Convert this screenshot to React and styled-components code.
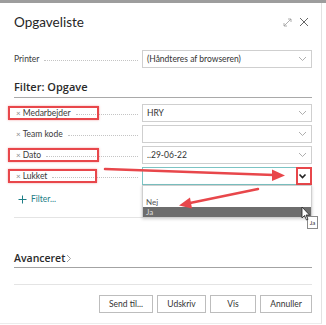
import React from 'react'
import styled, { createGlobalStyle, css } from 'styled-components'

const GlobalStyle = createGlobalStyle`
  html, body { margin: 0; padding: 0; background: #fff; }
  body { font-family: Lato, "Open Sans", sans-serif; color: #222; }
`

const Page = styled.div`
  position: relative;
  width: 326px;
  height: 325px;
  overflow: hidden;
  background: #fff;
`

const TopStrip = styled.div`
  height: 3px;
  background: #9d9d9d;
`

const Dialog = styled.div`
  width: 322px;
  box-sizing: border-box;
  padding: 0 9px 10px 14px;
  border-right: 1px solid #e2e2e2;
  border-bottom: 1px solid #ececec;
`

const Header = styled.div`
  height: 38px;
  display: flex;
  align-items: center;
  justify-content: space-between;
`

const Title = styled.h1`
  margin: 0;
  font-size: 13.5px;
  font-weight: 400;
  color: #262626;
`

const HeaderIcons = styled.div`
  display: flex;
  align-items: center;
  gap: 7px;
  padding-right: 3px;
  color: #7a7a7a;
`

const FieldRow = styled.div`
  display: flex;
  align-items: center;
  height: 18px;
  margin-top: ${p => p.$top || 0}px;
`

const Label = styled.div`
  position: relative;
  width: 128px;
  flex: 0 0 128px;
  display: flex;
  align-items: center;
  font-size: 8.5px;
  color: #3a3a3a;
  padding-left: ${p => (p.$removable ? 2 : 0)}px;
  box-sizing: border-box;
  white-space: nowrap;
  ${p => p.$marked && css`
    &::before {
      content: '';
      position: absolute;
      left: -6px;
      width: ${p.$markWidth || 83}px;
      top: -2px;
      bottom: -2px;
      border: 2px solid #e8474b;
      box-shadow: 0 0 2px rgba(232, 71, 75, 0.5);
    }
  `}
`

const Remove = styled.span`
  color: #8a8a8a;
  font-size: 8px;
  margin-right: 2px;
`

const Leader = styled.span`
  flex: 1;
  margin: 3px 4px 0 5px;
  border-bottom: 1px dotted #c4c4c4;
`

const SelectBox = styled.div`
  position: relative;
  flex: 1;
  height: 18px;
  box-sizing: border-box;
  border: 1px solid ${p => (p.$active ? '#7cc4c4' : '#cfcfcf')};
  display: flex;
  align-items: center;
  padding: 0 4px;
  font-size: 8.5px;
  color: #333;
  background: #fff;
`

const Chevron = styled.span`
  margin-left: auto;
  display: flex;
  align-items: center;
`

const ChevronMark = styled.span`
  position: absolute;
  right: -1px;
  top: -1px;
  width: 16px;
  height: 18px;
  box-sizing: border-box;
  border: 2px solid #e8474b;
`

const DropList = styled.div`
  position: absolute;
  left: -1px;
  right: -1px;
  top: 17px;
  border: 1px solid #cfcfcf;
  background: #fff;
  box-shadow: 0 1px 3px rgba(0, 0, 0, 0.2);
  z-index: 2;
`

const Option = styled.div`
  height: 10px;
  line-height: 10px;
  padding: 0 3px;
  font-size: 8px;
  color: ${p => (p.$selected ? '#dedede' : '#555')};
  background: ${p => (p.$selected ? '#6d6d6d' : 'transparent')};
  &:first-child { height: 11px; }
`

const SectionTitle = styled.h2`
  margin: 11px 0 6px;
  padding-bottom: 2px;
  font-family: "Open Sans", sans-serif;
  font-size: 11px;
  line-height: 16px;
  font-weight: 600;
  color: #2a2a2a;
  border-bottom: 1px solid #a9a9a9;
`

const Filters = styled.div`
  display: flex;
  flex-direction: column;
  gap: 3px;
`

const AddFilter = styled.div`
  margin-top: 7px;
  height: 14px;
  display: flex;
  align-items: center;
  gap: 4px;
  padding-left: 4px;
  font-size: 8.5px;
  color: #1d7d86;
`

const Divider = styled.div`
  margin-top: ${p => p.$top}px;
  border-top: 1px solid #e4e4e4;
`

const Advanced = styled.div`
  margin-top: 32px;
  padding-bottom: 1px;
  line-height: 16px;
  font-family: "Open Sans", sans-serif;
  font-size: 10.5px;
  font-weight: 600;
  color: #2a2a2a;
  border-bottom: 1px solid #a3a3a3;
  display: flex;
  align-items: center;
  gap: 1px;
`

const Footer = styled.div`
  margin-top: 10px;
  display: flex;
  justify-content: flex-end;
  gap: 4px;
`

const Button = styled.button`
  width: ${p => p.$w}px;
  height: 18px;
  padding: 0;
  border: 1px solid #bdbdbd;
  background: #fff;
  font-family: inherit;
  font-size: 8.5px;
  color: #333;
`

const Tooltip = styled.div`
  position: absolute;
  left: 307px;
  top: 216px;
  width: 11px;
  height: 13px;
  box-sizing: border-box;
  border: 1px solid #8a8a8a;
  background: #fff;
  font-size: 6px;
  display: flex;
  align-items: center;
  justify-content: center;
  color: #333;
  z-index: 3;
`

const Overlay = styled.svg`
  position: absolute;
  left: 0;
  top: 0;
  pointer-events: none;
  z-index: 4;
`

const SmallChevron = ({ bold }) => (
  <svg width="9" height="6" viewBox="0 0 9 6">
    {bold ? (
      <path d="M1.5 1.5 L4.5 4.5 L7.5 1.5" fill="none" stroke="#222" strokeWidth="1.6" />
    ) : (
      <path d="M1 1 L4.5 4.5 L8 1" fill="none" stroke="#9a9a9a" strokeWidth="0.8" />
    )}
  </svg>
)

const Field = ({ label, removable, marked, markWidth, value, children }) => (
  <FieldRow>
    <Label $removable={removable} $marked={marked} $markWidth={markWidth}>
      {removable && <Remove>×</Remove>}
      {label}
      <Leader />
    </Label>
    {children || (
      <SelectBox>
        {value}
        <Chevron><SmallChevron /></Chevron>
      </SelectBox>
    )}
  </FieldRow>
)

export default function App() {
  return (
    <Page>
      <GlobalStyle />
      <TopStrip />
      <Dialog>
        <Header>
          <Title>Opgaveliste</Title>
          <HeaderIcons>
            <svg width="9" height="9" viewBox="0 0 9 9">
              <path d="M1 8 L8 1 M5 1 H8 V4 M1 5 V8 H4" fill="none" stroke="#9a9a9a" strokeWidth="0.8" />
            </svg>
            <svg width="10" height="10" viewBox="0 0 10 10">
              <path d="M1 1 L9 9 M9 1 L1 9" fill="none" stroke="#666" strokeWidth="1" />
            </svg>
          </HeaderIcons>
        </Header>

        <FieldRow $top={9}>
          <Label>Printer<Leader /></Label>
          <SelectBox>
            (Håndteres af browseren)
            <Chevron><SmallChevron /></Chevron>
          </SelectBox>
        </FieldRow>

        <SectionTitle>Filter: Opgave</SectionTitle>

        <Filters>
          <Field label="Medarbejder" removable marked markWidth={87} value="HRY" />
          <Field label="Team kode" removable value="" />
          <Field label="Dato" removable marked markWidth={87} value="..29-06-22" />
          <Field label="Lukket" removable marked markWidth={85}>
            <SelectBox $active>
              <Chevron><SmallChevron bold /></Chevron>
              <ChevronMark />
              <DropList>
                <Option />
                <Option>Nej</Option>
                <Option $selected>Ja</Option>
              </DropList>
            </SelectBox>
          </Field>
        </Filters>

        <AddFilter>
          <svg width="9" height="9" viewBox="0 0 9 9">
            <path d="M4.5 0.5 V8.5 M0.5 4.5 H8.5" stroke="#1d7d86" strokeWidth="1" />
          </svg>
          Filter...
        </AddFilter>

        <Divider $top={11} />

        <Advanced>
          Avanceret
          <svg width="6" height="9" viewBox="0 0 6 9">
            <path d="M1 1 L4.5 4.5 L1 8" fill="none" stroke="#8a8a8a" strokeWidth="0.8" />
          </svg>
        </Advanced>

        <Divider $top={16} />

        <Footer>
          <Button $w={54}>Send til...</Button>
          <Button $w={49}>Udskriv</Button>
          <Button $w={46}>Vis</Button>
          <Button $w={52}>Annuller</Button>
        </Footer>
      </Dialog>

      <Tooltip>Ja</Tooltip>

      <Overlay width="326" height="325" viewBox="0 0 326 325">
        <line x1="105" y1="169" x2="274" y2="175" stroke="#e8474b" strokeWidth="2.5" strokeLinecap="round" />
        <polygon points="285,175.5 272,169.5 272,181" fill="#e8474b" />
        <line x1="258" y1="189" x2="190" y2="203" stroke="#e8474b" strokeWidth="2.5" strokeLinecap="round" />
        <polygon points="179,205.5 190,197.5 192,208.5" fill="#e8474b" />
        <path d="M302 207 L302 218 L304.5 215.5 L306.5 220 L308 219.3 L306 215 L309.5 215 Z" fill="#fff" stroke="#222" strokeWidth="0.8" strokeLinejoin="round" />
      </Overlay>
    </Page>
  )
}
